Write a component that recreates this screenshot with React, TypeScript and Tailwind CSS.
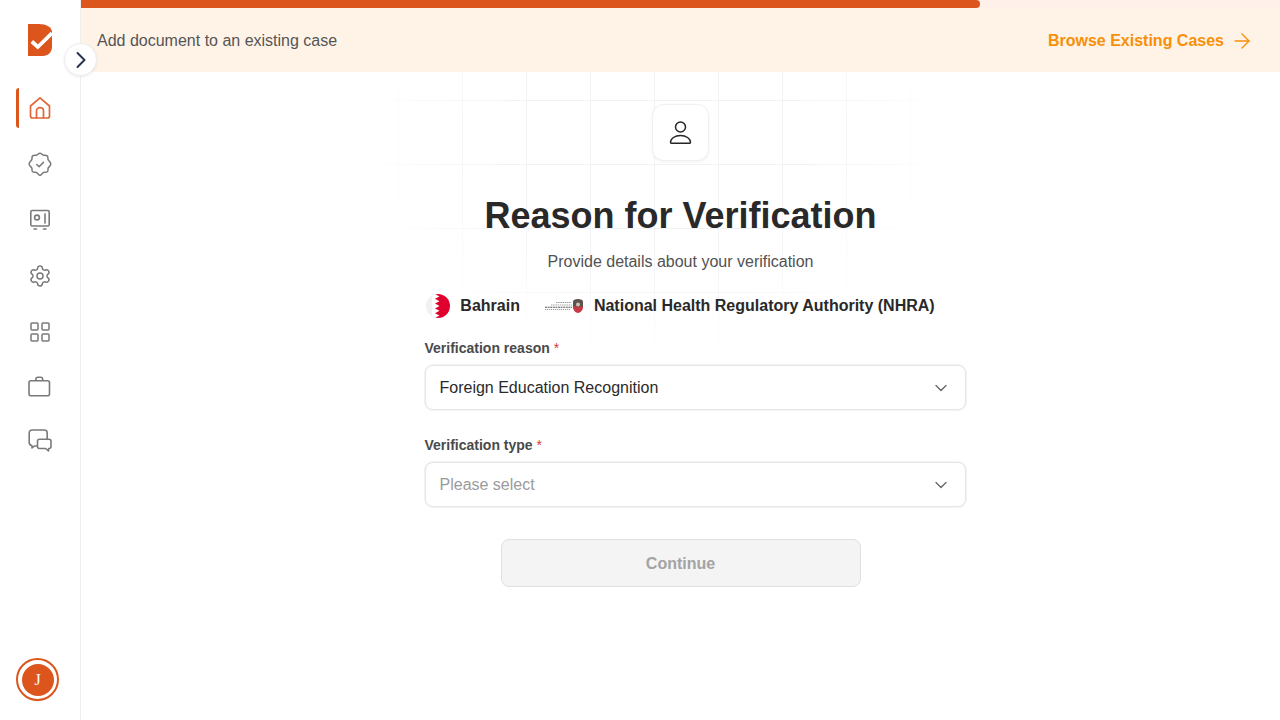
import React from "react";
import { ArrowRight, ChevronDown, ChevronRight, Settings, LayoutGrid } from "lucide-react";

function HomeIcon() {
  return (
    <svg width="24" height="24" viewBox="0 0 24 24" fill="none" stroke="#e0673a" strokeWidth="1.7" strokeLinejoin="round" strokeLinecap="round">
      <path d="M2.500 10 12 1.800 21.500 10v10c0 1.200-.9 2-2 2h-15c-1.100 0-2-.8-2-2z" />
      <path d="M8.500 22v-7c0-2 1.500-3.300 3.500-3.300s3.500 1.300 3.500 3.300v7" />
    </svg>
  );
}
function BadgeIcon() {
  return (
    <svg width="24" height="24" viewBox="0 0 24 24" fill="none" stroke="#7a7a7a" strokeWidth="1.500" strokeLinejoin="round" strokeLinecap="round">
      <path d="M12 1.200c1.400 0 2.200 1.700 3.400 2 1.300.3 3-.3 3.900.7 1 1 .3 2.500.8 3.700.4 1.200 2.700 2.400 2.700 4.400 0 1.900-2.200 2.800-2.600 4.100-.5 1.300.2 2.700-.8 3.700-1 1-2.600.3-3.800.7-1.200.4-2.200 2.800-3.600 2.800s-2.400-2.400-3.600-2.800c-1.200-.4-2.800.3-3.800-.7-1-1-.3-2.400-.8-3.700C3.300 14.800 1.100 13.900 1.100 12c0-2 2.300-3.200 2.700-4.400.5-1.200-.2-2.700.8-3.700.9-1 2.600-.4 3.900-.7 1.200-.3 2-2 3.500-2z" />
      <path d="m8.800 12.500 2.300 2.200 4.300-4.300" />
    </svg>
  );
}
function SafeIcon() {
  return (
    <svg width="24" height="24" viewBox="0 0 24 24" fill="none" stroke="#7a7a7a" strokeWidth="1.600" strokeLinecap="round" strokeLinejoin="round">
      <rect x="2.800" y="2.500" width="18.400" height="15.500" rx="1.500" />
      <circle cx="9" cy="9.500" r="2.400" />
      <path d="M17 6v9" />
      <path d="M6 21h2.500M15.500 21h2.500" />
    </svg>
  );
}
function BriefcaseIcon() {
  return (
    <svg width="24" height="24" viewBox="0 0 24 24" fill="none" stroke="#7a7a7a" strokeWidth="1.600" strokeLinejoin="round">
      <rect x="1" y="5.800" width="20.500" height="15" rx="2" />
      <path d="M7.800 5.800V4.500C7.800 3 8.800 2.300 10 2.300h2.500C13.700 2.300 14.700 3 14.700 4.500v1.300" />
    </svg>
  );
}
function ChatIcon() {
  return (
    <svg width="24" height="24" viewBox="0 0 24 24" fill="none" stroke="#7a7a7a" strokeWidth="1.600" strokeLinejoin="round">
      <path d="M9 18H6.500l-2.500 2v-2.300C2.300 17.300 1.200 16 1.200 14.500V5c0-1.800 1.200-3 3-3h12c1.700 0 3 1.200 3 3v6" />
      <path d="M11.500 11.300h9.500c1.200 0 2 .8 2 2v5.200c0 1.200-.8 2-2 2h-.3l-.2 2.500-2.800-2.500h-6.200c-1.200 0-2-.8-2-2v-5.200c0-1.200.8-2 2-2z" />
    </svg>
  );
}
function Logo() {
  return (
    <svg width="24" height="32" viewBox="0 0 24 32">
      <path d="M0 0h11c7 0 13 3 13 8v15c0 5-4 9-9 9H0z" fill="#dc551c" />
      <path d="M3.800 17.500l6 5.500L24 9.200" fill="none" stroke="#fff" strokeWidth="3.800" />
    </svg>
  );
}
function PersonIcon() {
  return (
    <svg width="24" height="24" viewBox="0 0 24 24" fill="none" stroke="#262626" strokeWidth="1.500">
      <circle cx="11.500" cy="6" r="5" />
      <path d="M1.500 21.500c0-4 4.500-7 10-7s10 3 10 7c0 .5-.3.700-.8.700H2.300c-.5 0-.8-.2-.8-.7z" />
    </svg>
  );
}
function BahrainFlag() {
  return (
    <svg width="24" height="24" viewBox="0 0 24 24" className="shrink-0 rounded-full">
      <rect width="24" height="24" fill="#ffffff" />
      <path d="M0 0h6v24H0z" fill="#ededed" opacity="0.8" />
      <path d="M9 0h15v24H9l4.500-2.400L9 19.200l4.500-2.400L9 14.400l4.500-2.400L9 9.600l4.500-2.400L9 4.800l4.500-2.400z" fill="#e0002d" />
    </svg>
  );
}
function NhraLogo() {
  return (
    <svg width="38" height="14" viewBox="0 0 38 14" className="shrink-0">
      <path d="M11 3.500h15" stroke="#9a9a9a" strokeWidth="1" strokeDasharray="1.500 .7" />
      <path d="M6 6h21" stroke="#a5a5a5" strokeWidth="1" strokeDasharray="1.500 .7" />
      <path d="M0 8.300h27" stroke="#5a5a5a" strokeWidth="1.100" strokeDasharray="2 .6" />
      <path d="M0 10.500h25" stroke="#9c9c9c" strokeWidth="1" strokeDasharray="1.200 .8" />
      <path d="M28 2.500C28 1 30 0 33 0s5 1 5 2.500V8H28z" fill="#5f544d" />
      <path d="M28 7.500h10c.3 3.500-2.500 6.500-5 6.500s-5.300-3-5-6.500z" fill="#c63a45" />
      <circle cx="33" cy="5.500" r="2" fill="#c9c2b8" />
    </svg>
  );
}

function NavItem({ active, h, children }: { active?: boolean; h: string; children: React.ReactNode }) {
  return (
    <div className={`relative flex w-full shrink-0 items-center justify-center ${h}`}>
      {active && <span className="absolute left-[16px] top-[8px] h-[40px] w-[3px] rounded-l-full bg-[#dc551c]" />}
      {children}
    </div>
  );
}

function Field({ label, value, placeholder }: { label: string; value: string; placeholder?: boolean }) {
  return (
    <div className="flex w-[541px] flex-col gap-[8px]">
      <div className="h-[18px] text-[14px] font-bold leading-[18px] text-[#4a4a4a]">
        {label} <span className="font-normal text-[#e0343c]">*</span>
      </div>
      <div className="flex h-[45px] items-center justify-between rounded-[8px] border border-[#e6e6e6] bg-white pl-[14px] pr-[14px] shadow-[0_0_0_1px_#f3f3f3,0_1px_2px_rgba(0,0,0,0.04)]">
        <span className={`text-[16px] ${placeholder ? "text-[#9b9b9b]" : "text-[#2a2a2a]"}`}>{value}</span>
        <ChevronDown size={20} strokeWidth={1.6} className="text-[#666]" />
      </div>
    </div>
  );
}

export default function App() {
  return (
    <div className="relative flex h-[720px] w-[1280px] overflow-hidden bg-white font-['Liberation_Sans',Arial,sans-serif]">
      <aside className="flex h-full w-[81px] shrink-0 flex-col items-center border-r border-[#eeeeee] bg-white pt-[24px] pb-[19px]">
        <div className="mb-[24px] shrink-0"><Logo /></div>
        <NavItem active h="h-[56px]"><HomeIcon /></NavItem>
        <NavItem h="h-[56px]"><BadgeIcon /></NavItem>
        <NavItem h="h-[56px]"><SafeIcon /></NavItem>
        <NavItem h="h-[56px]"><Settings size={24} strokeWidth={1.5} className="text-[#7a7a7a]" /></NavItem>
        <NavItem h="h-[56px]"><LayoutGrid size={24} strokeWidth={1.5} className="text-[#7a7a7a]" /></NavItem>
        <NavItem h="h-[54px]"><BriefcaseIcon /></NavItem>
        <NavItem h="h-[52px]"><ChatIcon /></NavItem>
        <div className="mt-auto mr-[5px] flex h-[43px] w-[43px] items-center justify-center rounded-full border-2 border-[#dc551c] bg-white">
          <div className="flex h-[32px] w-[32px] items-center justify-center rounded-full bg-[#dc551c] font-['Liberation_Serif',serif] text-[16px] text-white">J</div>
        </div>
      </aside>

      <main className="relative flex h-full min-w-0 flex-1 flex-col">
        <header className="relative flex h-[72px] shrink-0 items-center justify-between bg-[#fff3e8] pt-[9px] pl-[16px] pr-[26px]">
          <div className="absolute left-0 top-0 h-[8px] w-full rounded-r-full bg-[#fff0ea]">
            <div className="h-full w-[75%] rounded-r-full rounded-l-[4px] bg-[#dc551c]" />
          </div>
          <span className="text-[16px] text-[#555555]">Add document to an existing case</span>
          <span className="flex items-center gap-[6px] text-[16px] font-bold text-[#f78f08]">
            Browse Existing Cases
            <ArrowRight size={24} strokeWidth={1.4} />
          </span>
        </header>

        <div className="relative flex min-h-0 flex-1 flex-col items-center pt-[32px]">
          <div className="pointer-events-none absolute left-[279px] top-0 h-[300px] w-[640px] bg-[linear-gradient(to_right,#f1f1f6_1px,transparent_1px),linear-gradient(to_bottom,#f1f1f6_1px,transparent_1px)] bg-[size:64px_64px] bg-[position:38px_28px] [mask-image:radial-gradient(ellipse_46%_74%_at_46%_24%,black_45%,transparent_100%)]" />
          <div className="relative flex h-[57px] w-[57px] shrink-0 items-center justify-center rounded-[12px] border border-[#f1f1f4] bg-white shadow-[0_1px_3px_rgba(0,0,0,0.06)]">
            <PersonIcon />
          </div>
          <h1 className="relative mt-[33px] text-[36px] font-bold leading-[44px] text-[#292929]">Reason for Verification</h1>
          <p className="relative mt-[12px] text-[16px] leading-[24px] text-[#525252]">Provide details about your verification</p>
          <div className="relative mt-[20px] flex h-[24px] items-center">
            <BahrainFlag />
            <span className="ml-[10px] text-[16px] font-bold text-[#292929]">Bahrain</span>
            <span className="ml-[25px]"><NhraLogo /></span>
            <span className="ml-[11px] text-[16px] font-bold text-[#292929]">National Health Regulatory Authority (NHRA)</span>
          </div>
          <div className="relative mt-[21px] flex w-[512px] flex-col items-start gap-[26px]">
            <Field label="Verification reason" value="Foreign Education Recognition" />
            <Field label="Verification type" value="Please select" placeholder />
          </div>
          <div className="relative mt-[32px] flex h-[48px] w-[360px] items-center justify-center rounded-[8px] border border-[#e0e0e0] bg-[#f4f4f4] pt-[1px] text-[16px] font-bold text-[#a3a3a3]">
            Continue
          </div>
        </div>
      </main>

      <div className="absolute left-[64px] top-[43px] flex h-[33px] w-[33px] items-center justify-center rounded-full border border-[#eeeeee] bg-white shadow-[0_1px_3px_rgba(0,0,0,0.08)]">
        <ChevronRight size={28} strokeWidth={1.7} className="text-[#26324f]" />
      </div>
    </div>
  );
}
